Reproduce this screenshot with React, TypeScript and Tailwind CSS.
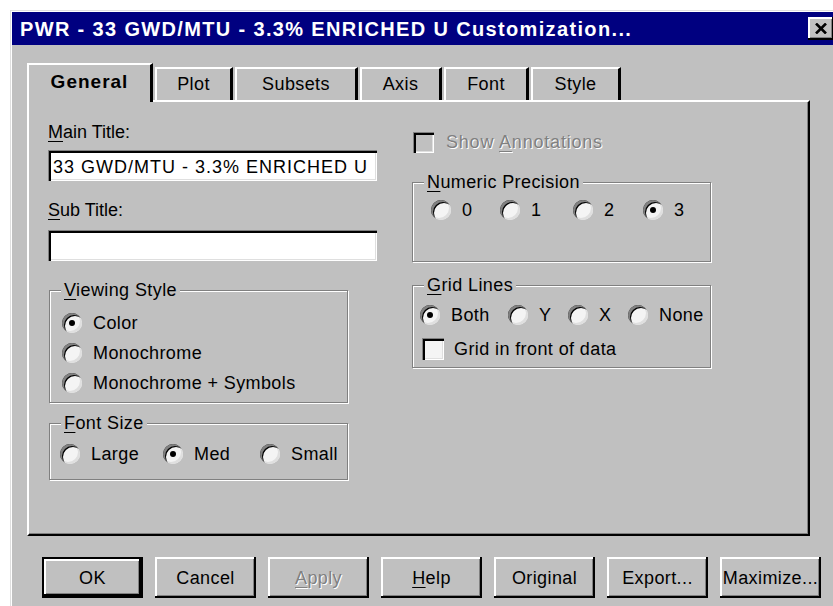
import React from "react";

// Win95-style 3D edge treatments
const raised =
  "shadow-[inset_-2px_-2px_0_#000,inset_2px_2px_0_#fff,inset_-3px_-3px_0_#808080]";
const sunken =
  "shadow-[inset_1px_1px_0_#808080,inset_3px_3px_0_#000,inset_-1px_-1px_0_#fff,inset_-2px_-2px_0_#dfdfdf]";

function Mn({ children }: { children: React.ReactNode }) {
  return <span className="underline decoration-1 underline-offset-[3px]">{children}</span>;
}

function Radio({ checked = false }: { checked?: boolean }) {
  return (
    <span className="flex h-[20px] w-[20px] shrink-0 items-center justify-center rounded-full bg-[#f4f4f4] shadow-[inset_2px_2px_0_#808080,inset_3px_3px_0_#000,inset_-2px_-2px_0_#dfdfdf]">
      {checked && <span className="h-[6px] w-[6px] rounded-full bg-black" />}
    </span>
  );
}

function RadioItem({
  checked,
  label,
  width,
}: {
  checked?: boolean;
  label: React.ReactNode;
  width?: string;
}) {
  return (
    <div className={`flex h-[22px] items-center gap-[11px] ${width ?? ""}`}>
      <Radio checked={checked} />
      <span>{label}</span>
    </div>
  );
}

function Group({
  label,
  className,
  children,
}: {
  label: React.ReactNode;
  className: string;
  children: React.ReactNode;
}) {
  return (
    <div
      className={`relative border border-[#808080] shadow-[inset_1px_1px_0_#fff,1px_1px_0_#fff] ${className}`}
    >
      <span className="absolute -top-[12px] left-[11px] bg-[#c0c0c0] px-[3px] leading-[22px]">
        {label}
      </span>
      {children}
    </div>
  );
}

function Button({
  children,
  isDefault,
  disabled,
}: {
  children: React.ReactNode;
  isDefault?: boolean;
  disabled?: boolean;
}) {
  return (
    <div
      className={`flex h-[41px] w-[101px] items-center justify-center ${
        isDefault ? "border-2 border-black" : ""
      }`}
    >
      <div
        className={`flex h-full w-full items-center justify-center ${raised} ${
          disabled ? "text-[#808080] [text-shadow:1px_1px_0_#fff]" : ""
        }`}
      >
        {children}
      </div>
    </div>
  );
}

const tabs = [
  { name: "Plot", w: "w-[78px]" },
  { name: "Subsets", w: "w-[123px]" },
  { name: "Axis", w: "w-[82px]" },
  { name: "Font", w: "w-[85px]" },
  { name: "Style", w: "w-[90px]" },
];

export default function App() {
  return (
    <div className="h-[606px] w-[833px] overflow-hidden bg-white pl-[10px] pt-[10px] font-['Liberation_Sans',Arial,sans-serif] text-[18px] leading-[22px] tracking-[0.4px] text-black">
      <div className="h-[600px] w-[830px] bg-[#c0c0c0] p-[2px] shadow-[inset_1px_1px_0_#dfdfdf,inset_2px_2px_0_#fff]">
        {/* caption bar */}
        <div className="flex h-[33px] items-center justify-between bg-[#000080] pl-[8px] pr-[4px]">
          <span className="text-[20px] font-bold tracking-[1.35px] text-white">
            PWR - 33 GWD/MTU - 3.3% ENRICHED U Customization...
          </span>
          <div
            className={`flex h-[23px] w-[26px] items-center justify-center bg-[#c0c0c0] ${raised}`}
          >
            <svg width="12" height="11" viewBox="0 0 12 11">
              <path d="M1 0.5 L11 10.5 M11 0.5 L1 10.5" stroke="#000" strokeWidth="2.6" />
            </svg>
          </div>
        </div>

        <div className="pl-[15px]">
          {/* tab strip */}
          <div className="mt-[18px] flex h-[37px] items-start gap-[2px]">
            <div className="relative z-10 flex h-[39px] w-[126px] items-center justify-center border-l-2 border-r-[3px] border-t-2 border-l-white border-r-black border-t-white bg-[#c0c0c0] pb-[4px] text-[19px] font-bold tracking-[1px]">
              General
            </div>
            {tabs.map((t) => (
              <div
                key={t.name}
                className={`mt-[4px] flex h-[33px] items-center justify-center border-l-2 border-r-[3px] border-t-2 border-l-white border-r-black border-t-white pb-[2px] ${t.w}`}
              >
                {t.name}
              </div>
            ))}
          </div>

          {/* tab page */}
          <div className="flex h-[436px] w-[783px] border-2 border-b-black border-l-white border-r-black border-t-white shadow-[inset_-1px_-1px_0_#808080]">
            {/* left column */}
            <div className="ml-[19px] flex w-[329px] flex-col">
              <div className="mt-[19px] tracking-[0px]">
                <Mn>M</Mn>ain Title:
              </div>
              <div
                className={`mt-[7px] flex h-[31px] items-center bg-white pl-[5px] pt-[2px] tracking-[1px] ${sunken}`}
              >
                33 GWD/MTU - 3.3% ENRICHED U
              </div>
              <div className="mt-[18px] tracking-[0px]">
                <Mn>S</Mn>ub Title:
              </div>
              <div className={`mt-[9px] h-[31px] bg-white ${sunken}`} />

              <Group
                label={
                  <>
                    <Mn>V</Mn>iewing Style
                  </>
                }
                className="ml-[1px] mt-[29px] h-[113px] w-[299px] pl-[12px] pt-[17px]"
              >
                <div className="flex h-[30px] items-center">
                  <RadioItem checked label="Color" />
                </div>
                <div className="flex h-[30px] items-center">
                  <RadioItem label="Monochrome" />
                </div>
                <div className="flex h-[30px] items-center">
                  <RadioItem label="Monochrome + Symbols" />
                </div>
              </Group>

              <Group
                label={
                  <>
                    <Mn>F</Mn>ont Size
                  </>
                }
                className="ml-[1px] mt-[20px] h-[57px] w-[299px] pl-[10px] pt-[19px]"
              >
                <div className="flex">
                  <RadioItem label="Large" width="w-[103px]" />
                  <RadioItem checked label="Med" width="w-[97px]" />
                  <RadioItem label="Small" />
                </div>
              </Group>
            </div>

            {/* right column */}
            <div className="ml-[35px] flex w-[299px] flex-col">
              <div className="mt-[29px] flex h-[22px] items-center gap-[12px] pl-[1px]">
                <span className="h-[21px] w-[21px] bg-[#c0c0c0] shadow-[inset_1px_1px_0_#808080,inset_3px_3px_0_#000,inset_-1px_-1px_0_#fff,inset_-2px_-2px_0_#dfdfdf]" />
                <span className="tracking-[0.8px] text-[#808080] [text-shadow:1px_1px_0_#fff]">
                  Show <Mn>A</Mn>nnotations
                </span>
              </div>

              <Group
                label={
                  <>
                    <Mn>N</Mn>umeric Precision
                  </>
                }
                className="mt-[29px] h-[80px] w-[299px] pl-[18px] pt-[16px]"
              >
                <div className="flex">
                  <RadioItem label="0" width="w-[69px]" />
                  <RadioItem label="1" width="w-[73px]" />
                  <RadioItem label="2" width="w-[70px]" />
                  <RadioItem checked label="3" />
                </div>
              </Group>

              <Group
                label={
                  <>
                    <Mn>G</Mn>rid Lines
                  </>
                }
                className="mt-[23px] h-[83px] w-[299px] pl-[7px] pt-[18px]"
              >
                <div className="flex">
                  <RadioItem checked label="Both" width="w-[88px]" />
                  <RadioItem label="Y" width="w-[60px]" />
                  <RadioItem label="X" width="w-[60px]" />
                  <RadioItem label="None" />
                </div>
                <div className="mt-[12px] flex h-[22px] items-center gap-[10px] pl-[2px]">
                  <span className="h-[22px] w-[22px] bg-[#f4f4f4] shadow-[inset_1px_1px_0_#808080,inset_3px_3px_0_#000,inset_-1px_-1px_0_#fff,inset_-2px_-2px_0_#dfdfdf]" />
                  <span>Grid in front of data</span>
                </div>
              </Group>
            </div>
          </div>

          {/* command buttons */}
          <div className="ml-[15px] mt-[21px] flex gap-[12px]">
            <Button isDefault>OK</Button>
            <Button>Cancel</Button>
            <Button disabled>
              <Mn>A</Mn>pply
            </Button>
            <Button>
              <Mn>H</Mn>elp
            </Button>
            <Button>Original</Button>
            <Button>Export...</Button>
            <Button>Maximize...</Button>
          </div>
        </div>
      </div>
    </div>
  );
}
